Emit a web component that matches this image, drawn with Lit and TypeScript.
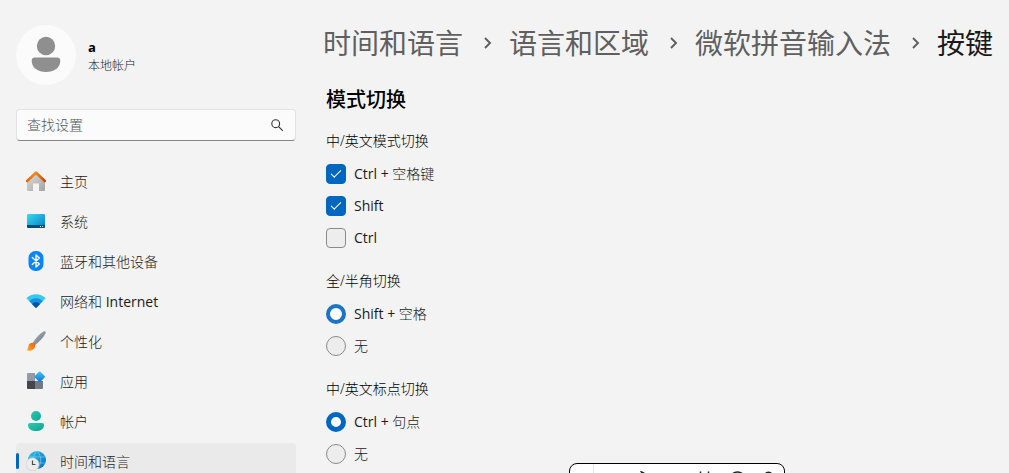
import { LitElement, html, css, svg } from "lit";
import { customElement } from "lit/decorators.js";
import { classMap } from "lit/directives/class-map.js";

const icons = {
  home: svg`<svg width="20" height="20" viewBox="0 0 20 20" aria-hidden="true">
    <defs>
      <linearGradient id="hb" x1="0" y1="0" x2="1" y2="1"><stop offset="0" stop-color="#dedede"/><stop offset="1" stop-color="#a3a3a3"/></linearGradient>
      <linearGradient id="hr" x1="0" y1="0" x2="1" y2="0"><stop offset="0" stop-color="#e0690c"/><stop offset=".45" stop-color="#f78a17"/><stop offset="1" stop-color="#cf4510"/></linearGradient>
    </defs>
    <path d="M1 9.500 10 1.800l9 7.700V19a1 1 0 0 1-1 1h-5v-7.500H7V20H2a1 1 0 0 1-1-1z" fill="url(#hb)"/>
    <path d="M1.200 10 10 1.700l8.800 8.300" fill="none" stroke="url(#hr)" stroke-width="2.600" stroke-linecap="round" stroke-linejoin="round"/>
  </svg>`,
  system: svg`<svg width="20" height="20" viewBox="0 0 20 20" aria-hidden="true">
    <defs><linearGradient id="sy" x1="0" y1="0" x2="1" y2="1"><stop offset="0" stop-color="#35dff0"/><stop offset="1" stop-color="#0a78c4"/></linearGradient></defs>
    <rect x="1" y="3" width="18" height="14" rx="1.2" fill="url(#sy)"/>
    <path d="M1 14h18v1.8a1.2 1.2 0 0 1-1.2 1.2H2.200A1.200 1.200 0 0 1 1 15.800z" fill="#0b4a72"/>
    <path d="M14 15.500h1M16.200 15.500h1" stroke="#e8f6ff" stroke-width="1"/>
  </svg>`,
  bluetooth: svg`<svg width="20" height="20" viewBox="0 0 20 20" aria-hidden="true">
    <rect x="2.500" y="0" width="15" height="20" rx="7" fill="#0a84fa"/>
    <path d="M6.300 6.600 13.300 13 10 16V4l3.300 3-7 6.400" fill="none" stroke="#fff" stroke-width="1.400" stroke-linejoin="round" stroke-linecap="round"/>
  </svg>`,
  network: svg`<svg width="20" height="20" viewBox="0 0 20 20" aria-hidden="true">
    <path d="M.4 7.200C5.500 1.900 14.500 1.900 19.600 7.200L10.600 16.500a.8.8 0 0 1-1.200 0z" fill="#35c8f0"/>
    <path d="M3.200 10.100c3.800-3.900 9.800-3.900 13.600 0l-6.200 6.400a.8.8 0 0 1-1.200 0z" fill="#1690e0"/>
    <path d="M6 13c2.300-2.300 5.700-2.300 8 0l-3.400 3.500a.8.8 0 0 1-1.200 0z" fill="#0c50a0"/>
  </svg>`,
  brush: svg`<svg width="20" height="20" viewBox="0 0 20 20" aria-hidden="true">
    <defs>
      <linearGradient id="bh" x1="0" y1="0" x2="1" y2="1"><stop offset="0" stop-color="#b3b9c2"/><stop offset="1" stop-color="#686f79"/></linearGradient>
      <linearGradient id="bt" x1="0" y1="1" x2="1" y2="0"><stop offset="0" stop-color="#ffad28"/><stop offset="1" stop-color="#e75e12"/></linearGradient>
    </defs>
    <path d="M6.800 11.800C10 6.500 14 2.300 18 .3c1-.4 2 .6 1.600 1.600C17.700 6 13.600 10.500 9.100 14z" fill="url(#bh)"/>
    <path d="M6.700 11.700c1.800.2 2.700 1.400 2.500 3.200C8.700 18.600 4 20.800.6 19c1.700-.7 1.300-2.600 2-4.600.7-1.800 2.200-2.900 4.100-2.700z" fill="url(#bt)"/>
  </svg>`,
  apps: svg`<svg width="20" height="20" viewBox="0 0 20 20" aria-hidden="true">
    <defs><linearGradient id="ap" x1="0" y1="0" x2="1" y2="1"><stop offset="0" stop-color="#38cdf7"/><stop offset="1" stop-color="#1272d8"/></linearGradient></defs>
    <path d="M1 3a1 1 0 0 1 1-1h7v8H1z" fill="#959ba4"/>
    <path d="M1 10h8v8H2a1 1 0 0 1-1-1z" fill="#43474d"/>
    <path d="M9 10h8v7a1 1 0 0 1-1 1H9z" fill="#747a83"/>
    <rect x="9.700" y="1.700" width="8" height="8" rx="1" transform="rotate(45 13.700 5.700)" fill="url(#ap)"/>
  </svg>`,
  account: svg`<svg width="20" height="20" viewBox="0 0 20 20" aria-hidden="true">
    <defs><linearGradient id="ac" x1="0" y1="0" x2="1" y2="1"><stop offset="0" stop-color="#2bcbb4"/><stop offset="1" stop-color="#11a48e"/></linearGradient></defs>
    <circle cx="10" cy="5" r="5" fill="url(#ac)"/>
    <path d="M4 12h12a2 2 0 0 1 2 2c0 4-3.500 6-8 6s-8-2-8-6a2 2 0 0 1 2-2z" fill="url(#ac)"/>
  </svg>`,
  time: svg`<svg width="20" height="20" viewBox="0 0 20 20" aria-hidden="true">
    <defs><linearGradient id="tm" x1="0" y1="0" x2="1" y2="1"><stop offset="0" stop-color="#2fc4e6"/><stop offset="1" stop-color="#0b68bd"/></linearGradient></defs>
    <circle cx="11" cy="9" r="9" fill="url(#tm)"/>
    <path d="M2.500 6h17M2.500 12h17M11 0c-5 5-5 13 0 18 5-5 5-13 0-18z" fill="none" stroke="#7fe3f5" stroke-opacity=".7" stroke-width=".8"/>
    <circle cx="6.500" cy="13.300" r="6.500" fill="#ececec" stroke="#c4c4c4" stroke-width=".5"/>
    <path d="M6.500 9.500v4h3" fill="none" stroke="#4b4b4b" stroke-width="1.200"/>
  </svg>`,
};

// Chinese text is set light; Latin runs keep the regular weight.
const mixed = (text: string) =>
  text.split(/([A-Za-z+][A-Za-z+ ]*)/).filter(Boolean).map((part) =>
    /^[A-Za-z+]/.test(part) ? html`<span class="latin">${part}</span>` : part);

@customElement("settings-nav")
export class SettingsNav extends LitElement {
  static styles = css`
    :host { display: block; }
    .latin { font-weight: 400; }
    .profile { display: flex; align-items: center; gap: 12px; height: 60px; }
    .avatar { width: 60px; height: 60px; border-radius: 50%; background: #fbfbfb; }
    .who { padding-top: 4px; }
    .name { font-size: 13px; line-height: 18px; font-weight: 700; color: #000; }
    .kind { font-size: 12px; line-height: 20px; color: #1a1a1a; }
    .search {
      display: flex; align-items: center; box-sizing: border-box; height: 32px;
      margin: 24px 0 22px; padding: 0 12px 0 10px; background: #fbfbfb;
      border: 1px solid #e2e2e2; border-bottom-color: #868686; border-radius: 4px;
    }
    .box { flex: 1; min-width: 0; border: 0; padding: 0; background: none; outline: none; font: inherit; color: #222; }
    .box::placeholder { color: #555; opacity: 1; }
    .list { display: flex; flex-direction: column; gap: 4px; margin: 0; padding: 0; list-style: none; }
    .item {
      position: relative; display: flex; align-items: center; gap: 14px; height: 36px;
      padding: 0 10px; border-radius: 4px; color: #1a1a1a; text-decoration: none;
    }
    .label { padding-top: 2px; }
    .item:hover, .current { background: #eaeaea; }
    .current::before {
      content: ""; position: absolute; left: 0; top: 10px; width: 3px; height: 16px;
      border-radius: 2px; background: #0067c0;
    }
  `;
  items = [
    ["主页", icons.home],
    ["系统", icons.system],
    ["蓝牙和其他设备", icons.bluetooth],
    ["网络和 Internet", icons.network],
    ["个性化", icons.brush],
    ["应用", icons.apps],
    ["帐户", icons.account],
    ["时间和语言", icons.time],
  ] as const;
  render() {
    return html`
      <div class="profile">
        <svg class="avatar" viewBox="0 0 60 60" aria-hidden="true">
          <circle cx="30" cy="21" r="9.200" fill="#8f8f8f" />
          <path d="M19 32.500h22a3.300 3.300 0 0 1 3.300 3.300C44.300 43 38 47 30 47s-14.300-4-14.300-11.200a3.300 3.300 0 0 1 3.300-3.300z" fill="#8f8f8f" />
        </svg>
        <div class="who"><div class="name">a</div><div class="kind">本地帐户</div></div>
      </div>
      <label class="search">
        <input class="box" type="text" placeholder="查找设置" aria-label="查找设置" />
        <svg width="12" height="12" viewBox="0 0 12 12" aria-hidden="true">
          <circle cx="4.700" cy="4.700" r="3.900" fill="none" stroke="#333" stroke-width="1.100" />
          <path d="m7.600 7.600 3.800 3.800" stroke="#333" stroke-width="1.200" stroke-linecap="round" />
        </svg>
      </label>
      <nav>
        <ul class="list">
          ${this.items.map(([text, icon], i) => html`<li>
            <a href="#" class=${classMap({ item: true, current: i === 7 })}>${icon}<span class="label">${mixed(text)}</span></a>
          </li>`)}
        </ul>
      </nav>
    `;
  }
}

@customElement("option-group")
export class OptionGroup extends LitElement {
  static properties = { heading: {}, kind: {}, options: { attribute: false }, hovered: { type: Boolean } };
  declare heading: string;
  declare kind: "checkbox" | "radio";
  declare options: [string, boolean][];
  declare hovered: boolean;
  static styles = css`
    :host { display: block; }
    .latin { font-weight: 400; }
    .group { margin: 0; padding: 0; border: 0; min-width: 0; }
    .heading { padding: 0; margin-bottom: 7px; line-height: 20px; color: #000; }
    .row { display: flex; align-items: center; gap: 8px; height: 32px; width: fit-content; color: #1a1a1a; }
    .mark {
      appearance: none; box-sizing: border-box; width: 20px; height: 20px; margin: 0;
      border: 1px solid #8a8a8a; background: #ededed;
    }
    .checkbox { display: grid; place-items: center; border-radius: 4px; }
    .checkbox:checked { border-color: #0067c0; background: #0067c0; }
    .checkbox:checked::before {
      content: ""; width: 9px; height: 4px; margin-bottom: 3px; box-sizing: content-box;
      border: solid #fff; border-width: 0 0 1px 1px; transform: rotate(-45deg);
    }
    .radio { border-radius: 50%; }
    .radio:checked { border: 5px solid #0067c0; background: #fff; }
    .hovered .radio:checked { border-width: 4px; border-color: #1975c5; }
  `;
  render() {
    return html`<fieldset class=${classMap({ group: true, hovered: this.hovered })}>
      <legend class="heading">${this.heading}</legend>
      ${this.options.map(([text, on]) => html`<label class="row">
        <input class="mark ${this.kind}" type=${this.kind} name="choice" ?checked=${on} />
        <span>${mixed(text)}</span>
      </label>`)}
    </fieldset>`;
  }
}

@customElement("ime-toolbar")
export class ImeToolbar extends LitElement {
  static styles = css`
    :host { display: block; }
    .bar {
      box-sizing: border-box; width: 216px; height: 40px; overflow: hidden;
      border: 1px solid #000; border-radius: 8px; background: #fff;
    }
    .art { display: block; }
  `;
  render() {
    return html`<div class="bar" role="toolbar" aria-label="输入法">
      <svg class="art" width="214" height="38" viewBox="0 0 214 38" fill="none" stroke="#222" stroke-width="1.500" aria-hidden="true">
        <path d="M23.500 0v38" stroke="#e3e3e3" stroke-width="1" />
        <path d="M71.500 8c7 2 9 13-3 14 5-4 6-9 3-14z" />
        <path d="M130.500 7.500v8M138.500 7.500v8" />
        <circle cx="167.500" cy="16" r="8" />
        <path d="M195 12c0-5 7-5 7 0v7h-7z" />
      </svg>
    </div>`;
  }
}

@customElement("app-root")
export class AppRoot extends LitElement {
  static styles = css`
    :host {
      position: relative; display: grid; grid-template-columns: 280px minmax(0, 1fr); gap: 30px;
      box-sizing: border-box; height: 100vh; overflow: hidden; padding: 25px 16px 0;
      background: #f3f3f3; color: #1a1a1a;
      font: 300 14px/20px "Open Sans", "Noto Sans CJK SC", sans-serif;
    }
    .crumbs { display: flex; align-items: center; margin: 0 -16px 0 -3px; padding: 0; list-style: none; white-space: nowrap; font-size: 28px; line-height: 36px; font-weight: 400; }
    .crumb { display: flex; align-items: center; color: #5f5f5f; }
    .link { color: inherit; text-decoration: none; }
    .here { color: #1a1a1a; }
    .sep { margin: 0 17px 0 20px; }
    .title { margin: 25px 0 17px; font-size: 20px; line-height: 28px; font-weight: 500; color: #000; }
    .groups { display: flex; flex-direction: column; gap: 17px; }
    .ime { position: absolute; left: 569px; top: 463px; }
  `;
  render() {
    return html`
      <settings-nav></settings-nav>
      <main>
        <ol class="crumbs">
          ${["时间和语言", "语言和区域", "微软拼音输入法"].map((t) => html`<li class="crumb">
            <a class="link" href="#">${t}</a>
            <svg class="sep" width="9" height="12" viewBox="0 0 9 12" aria-hidden="true"><path d="m2 1 5 5-5 5" fill="none" stroke="#5f5f5f" stroke-width="1.900" /></svg>
          </li>`)}
          <li class="crumb here" aria-current="page">按键</li>
        </ol>
        <h1 class="title">模式切换</h1>
        <div class="groups">
          <option-group heading="中/英文模式切换" kind="checkbox" .options=${[["Ctrl + 空格键", true], ["Shift", true], ["Ctrl", false]]}></option-group>
          <option-group heading="全/半角切换" kind="radio" hovered .options=${[["Shift + 空格", true], ["无", false]]}></option-group>
          <option-group heading="中/英文标点切换" kind="radio" .options=${[["Ctrl + 句点", true], ["无", false]]}></option-group>
        </div>
      </main>
      <ime-toolbar class="ime"></ime-toolbar>
    `;
  }
}
